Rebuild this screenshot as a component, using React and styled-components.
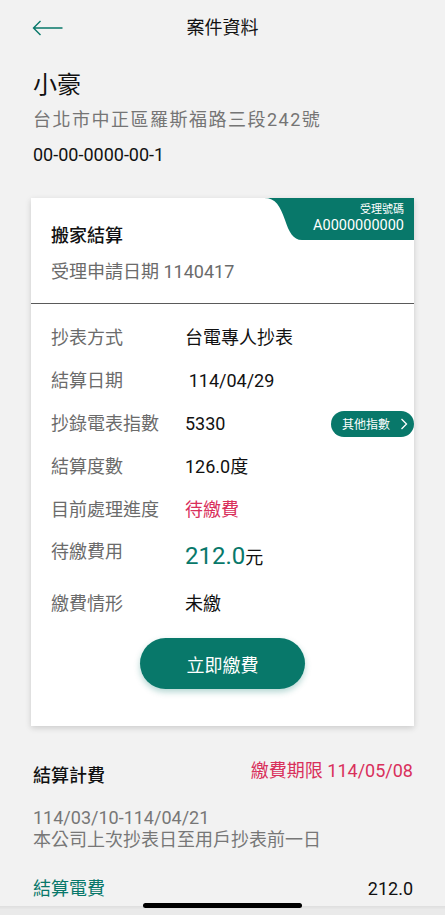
import React from 'react'
import styled, { createGlobalStyle, css } from 'styled-components'

const TEAL = '#08786a'
const PINK = '#d9305c'

const GlobalStyle = createGlobalStyle`
  body {
    margin: 0;
    background: #f2f2f2;
    font-family: Roboto, "Noto Sans CJK TC", "Noto Sans", sans-serif;
    color: #111;
  }
`

const Page = styled.div`
  min-height: 100vh;
  padding-bottom: 40px;
`

const Header = styled.div`
  height: 56px;
  display: flex;
  align-items: center;
  justify-content: center;
  position: relative;
`
const BackButton = styled.button`
  position: absolute;
  left: 32px;
  top: 20px;
  padding: 0;
  border: none;
  background: none;
  display: flex;
`
const Title = styled.div`
  font-size: 18px;
  line-height: 24px;
  color: #111;
`

const Profile = styled.div`
  padding: 14px 33px 0;
`
const Name = styled.div`
  font-size: 24px;
  line-height: 30px;
`
const Address = styled.div`
  font-size: 18px;
  line-height: 30px;
  margin-top: 5px;
  color: #757575;
  letter-spacing: 1.5px;
`
const AccountNo = styled.div`
  font-size: 18px;
  line-height: 30px;
  margin-top: 5px;
`

const Card = styled.div`
  margin: 28px 31px 0;
  background: #fff;
  box-shadow: 0 2px 6px rgba(0, 0, 0, 0.16);
`
const CardHead = styled.div`
  position: relative;
  height: 106px;
  padding: 25px 20px 0;
  box-sizing: border-box;
  border-bottom: 1px solid #5a5a5a;
`
const CardTitle = styled.div`
  font-size: 18px;
  font-weight: 500;
  line-height: 26px;
`
const CardSub = styled.div`
  font-size: 18px;
  line-height: 26px;
  margin-top: 10px;
  color: #6b6b6b;
`
const Badge = styled.div`
  position: absolute;
  top: 0;
  right: 0;
  height: 42px;
  display: flex;
`
const BadgeBody = styled.div`
  background: ${TEAL};
  color: #fff;
  text-align: right;
  padding: 5px 10px 0 0;
  box-sizing: border-box;
  width: 112px;
`
const BadgeLabel = styled.div`
  font-size: 11px;
  line-height: 14px;
`
const BadgeValue = styled.div`
  font-size: 14.5px;
  line-height: 18px;
`

const Rows = styled.div`
  padding: 12px 0 37px 20px;
`
const Row = styled.div`
  display: flex;
  align-items: center;
  height: ${(p) => (p.tall ? '51px' : '43px')};
  ${(p) =>
    p.tall &&
    css`
      align-items: flex-start;
    `}
`
const Label = styled.div`
  width: 134px;
  flex-shrink: 0;
  font-size: 18px;
  line-height: 42px;
  color: #6b6b6b;
`
const Value = styled.div`
  font-size: 18px;
  line-height: 42px;
  color: ${(p) => p.color || '#111'};
  ${(p) =>
    p.tall &&
    css`
      line-height: 50px;
    `}
`
const Amount = styled.span`
  font-size: 24px;
  color: ${TEAL};
`
const Unit = styled.span`
  font-size: 18px;
  color: #111;
`
const Pill = styled.button`
  margin-left: auto;
  height: 26px;
  width: 83px;
  border: none;
  border-radius: 13px;
  background: ${TEAL};
  color: #fff;
  font-family: inherit;
  font-size: 12px;
  display: flex;
  align-items: center;
  justify-content: space-between;
  padding: 0 6px 0 11px;
  box-sizing: border-box;
`
const PayButton = styled.button`
  display: block;
  margin: 13px auto 0;
  transform: translateX(-10px);
  width: 165px;
  height: 51px;
  border: none;
  border-radius: 26px;
  background: ${TEAL};
  color: #fff;
  font-family: inherit;
  font-size: 18px;
  box-shadow: 0 3px 6px rgba(8, 120, 106, 0.3);
`

const Section = styled.div`
  padding: 35px 32px 0 33px;
`
const SectionHead = styled.div`
  display: flex;
  justify-content: space-between;
  align-items: flex-start;
`
const SectionTitle = styled.div`
  font-size: 18px;
  font-weight: 500;
  line-height: 30px;
`
const Deadline = styled.div`
  font-size: 18px;
  line-height: 20px;
  color: ${PINK};
`
const Period = styled.div`
  margin-top: 16px;
  font-size: 18px;
  line-height: 22px;
  color: #777;
`
const FeeList = styled.div`
  margin-top: 23px;
`
const FeeRow = styled.div`
  display: flex;
  justify-content: space-between;
  height: 36px;
  font-size: 18px;
  line-height: 30px;
`
const FeeName = styled.div`
  color: ${TEAL};
`
const FeeValue = styled.div`
  color: #111;
`

const HomeArea = styled.div`
  position: fixed;
  left: 0;
  right: 0;
  bottom: 0;
  display: flex;
  flex-direction: column;
  align-items: center;
`
const Indicator = styled.div`
  width: 159px;
  height: 5px;
  border-radius: 3px;
  background: #000;
  position: relative;
  z-index: 1;
  margin-bottom: -2px;
`
const Band = styled.div`
  align-self: stretch;
  height: 9px;
  background: linear-gradient(to bottom, rgba(0, 0, 0, 0.08), rgba(0, 0, 0, 0.03) 40%, rgba(0, 0, 0, 0.03));
`

const BackArrow = () => (
  <svg width='31' height='16' viewBox='0 0 31 16' fill='none'>
    <path d='M1.5 8H30.5M8.5 1L1.5 8L8.5 15' stroke={TEAL} strokeWidth='1.4' />
  </svg>
)

const BadgeWave = () => (
  <svg width='38' height='42' viewBox='0 0 38 42'>
    <path d='M0 0C12 0 16 8 21 22C25 34 29 42 38 42V0Z' fill={TEAL} />
  </svg>
)

const Chevron = () => (
  <svg width='8' height='12' viewBox='0 0 8 12' fill='none'>
    <path d='M1.5 1L6.5 6L1.5 11' stroke='#fff' strokeWidth='1.3' />
  </svg>
)

const details = [
  { label: '抄表方式', value: '台電專人抄表' },
  { label: '結算日期', value: '\u2009114/04/29' },
  { label: '抄錄電表指數', value: '5330', more: true },
  { label: '結算度數', value: '126.0度' },
  { label: '目前處理進度', value: '待繳費', color: PINK }
]

const fees = [
  { name: '結算電費', value: '212.0' },
  { name: '公設分攤電費', value: '0.0' }
]

const App = () => {
  return (
    <Page>
      <GlobalStyle />
      <Header>
        <BackButton aria-label='back'>
          <BackArrow />
        </BackButton>
        <Title>案件資料</Title>
      </Header>

      <Profile>
        <Name>小豪</Name>
        <Address>台北市中正區羅斯福路三段242號</Address>
        <AccountNo>00-00-0000-00-1</AccountNo>
      </Profile>

      <Card>
        <CardHead>
          <CardTitle>搬家結算</CardTitle>
          <CardSub>受理申請日期 1140417</CardSub>
          <Badge>
            <BadgeWave />
            <BadgeBody>
              <BadgeLabel>受理號碼</BadgeLabel>
              <BadgeValue>A0000000000</BadgeValue>
            </BadgeBody>
          </Badge>
        </CardHead>
        <Rows>
          {details.map((d) => (
            <Row key={d.label}>
              <Label>{d.label}</Label>
              <Value color={d.color}>{d.value}</Value>
              {d.more && (
                <Pill>
                  其他指數
                  <Chevron />
                </Pill>
              )}
            </Row>
          ))}
          <Row tall>
            <Label>待繳費用</Label>
            <Value tall>
              <Amount>212.0</Amount>
              <Unit>元</Unit>
            </Value>
          </Row>
          <Row>
            <Label>繳費情形</Label>
            <Value>未繳</Value>
          </Row>
          <PayButton>立即繳費</PayButton>
        </Rows>
      </Card>

      <Section>
        <SectionHead>
          <SectionTitle>結算計費</SectionTitle>
          <Deadline>繳費期限 114/05/08</Deadline>
        </SectionHead>
        <Period>
          114/03/10-114/04/21
          <br />
          本公司上次抄表日至用戶抄表前一日
        </Period>
        <FeeList>
          {fees.map((f) => (
            <FeeRow key={f.name}>
              <FeeName>{f.name}</FeeName>
              <FeeValue>{f.value}</FeeValue>
            </FeeRow>
          ))}
        </FeeList>
      </Section>

      <HomeArea>
        <Indicator />
        <Band />
      </HomeArea>
    </Page>
  )
}

export default App
